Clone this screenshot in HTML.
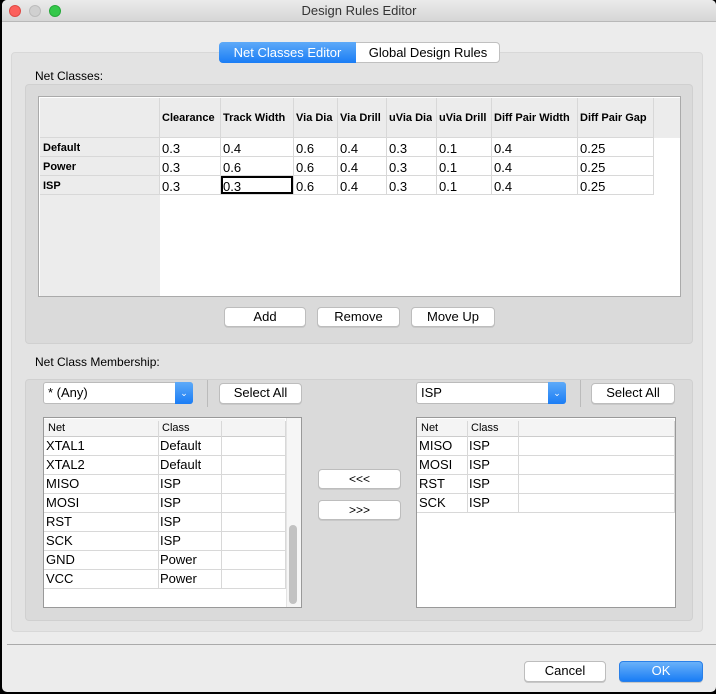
<!DOCTYPE html><html><head><style>
*{box-sizing:border-box;margin:0;padding:0}
body{width:716px;height:694px;background:#000;font-family:"Liberation Sans",sans-serif;font-size:12px;color:#000;position:relative;overflow:hidden}
.a{position:absolute}
.win{left:2px;top:0;width:714px;height:692px;background:#ececec;border-radius:5px;overflow:hidden}
.title{left:0;top:0;width:714px;height:22px;background:linear-gradient(#ebebeb,#d6d6d6);border-bottom:1px solid #b8b8b8;text-align:center;line-height:22px;font-size:13px;color:#333}
.dot{width:12px;height:12px;border-radius:50%;top:5px}
.btn{background:#fff;border:1px solid #bdbdbd;border-radius:4px;text-align:center;font-size:13px;line-height:18px;box-shadow:0 1px 0 #c8c8c8}
.cell{position:absolute;white-space:nowrap;overflow:hidden}
.hl{position:absolute;background:#d8d8d8}
</style></head><body>
<div class="a win"><div class="a" style="left:-2px;top:0;width:716px;height:692px">
<div class="a title" style="left:2px">Design Rules Editor</div>
<div class="a dot" style="left:9px;background:#fc605c;border:1px solid #de4a45"></div>
<div class="a dot" style="left:29px;background:#d0d0d0;border:1px solid #bcbcbc"></div>
<div class="a dot" style="left:49px;background:#34c84a;border:1px solid #26a93a"></div>

<div class="a" style="left:11px;top:52px;width:692px;height:580px;background:#e3e3e3;border:1px solid #d8d8d8;border-radius:4px"></div>
<div class="a" style="left:219px;top:42px;width:281px;height:21px;border:1px solid #c0c0c0;border-radius:4px;background:#fff;font-size:13px;line-height:19px">
<div class="a" style="left:-1px;top:-1px;width:137px;height:21px;background:linear-gradient(#5eaaf8,#1a7df5);border-radius:4px 0 0 4px;color:#fff;text-align:center;line-height:21px">Net Classes Editor</div>
<div class="a" style="left:136px;top:0;width:144px;text-align:center">Global Design Rules</div></div>

<div class="a" style="left:35px;top:69px">Net Classes:</div>
<div class="a" style="left:25px;top:84px;width:668px;height:260px;background:#dadada;border:1px solid #d0d0d0;border-radius:4px"></div>
<div class="a" style="left:38px;top:96px;width:643px;height:201px;background:#fff;border:1px solid #aaa">
<div class="a" style="left:1px;top:1px;width:120px;height:198px;background:#ececec"></div>
<div class="a" style="left:1px;top:1px;width:640px;height:40px;background:#ececec"></div>
</div>
<div id="t"></div>

<div class="a btn" style="left:224px;top:307px;width:82px;height:20px">Add</div>
<div class="a btn" style="left:317px;top:307px;width:83px;height:20px">Remove</div>
<div class="a btn" style="left:411px;top:307px;width:84px;height:20px">Move Up</div>

<div class="a" style="left:35px;top:355px">Net Class Membership:</div>
<div class="a" style="left:25px;top:379px;width:668px;height:242px;background:#dadada;border:1px solid #d0d0d0;border-radius:4px"></div>

<div class="a" style="left:43px;top:382px;width:150px;height:22px;background:#fff;border:1px solid #bbb;border-radius:3px;font-size:13px;line-height:20px;padding-left:4px">* (Any)<div class="a" style="right:-1px;top:-1px;width:18px;height:22px;background:linear-gradient(#5eaaf8,#1a7df5);border-radius:0 3px 3px 0;color:#fff;font-size:9px;text-align:center;line-height:22px">&#8964;</div></div>
<div class="a" style="left:207px;top:380px;width:1px;height:27px;background:#bbb"></div>
<div class="a btn" style="left:219px;top:383px;width:83px;height:21px">Select All</div>
<div class="a" style="left:416px;top:382px;width:150px;height:22px;background:#fff;border:1px solid #bbb;border-radius:3px;font-size:13px;line-height:20px;padding-left:4px">ISP<div class="a" style="right:-1px;top:-1px;width:18px;height:22px;background:linear-gradient(#5eaaf8,#1a7df5);border-radius:0 3px 3px 0;color:#fff;font-size:9px;text-align:center;line-height:22px">&#8964;</div></div>
<div class="a" style="left:580px;top:380px;width:1px;height:27px;background:#bbb"></div>
<div class="a btn" style="left:591px;top:383px;width:84px;height:21px">Select All</div>

<div class="a" style="left:43px;top:417px;width:259px;height:191px;background:#fff;border:1px solid #999"></div>
<div class="a" style="left:416px;top:417px;width:260px;height:191px;background:#fff;border:1px solid #999"></div>
<div class="a" style="left:286px;top:418px;width:15px;height:189px;background:#f6f6f6;border-left:1px solid #e4e4e4"></div>
<div class="a" style="left:289px;top:525px;width:8px;height:79px;background:#c2c2c2;border-radius:4px"></div>
<div id="l"></div>

<div class="a btn" style="left:318px;top:469px;width:83px;height:20px;font-size:12px">&lt;&lt;&lt;</div>
<div class="a btn" style="left:318px;top:500px;width:83px;height:20px;font-size:12px">&gt;&gt;&gt;</div>

<div class="a" style="left:7px;top:644px;width:709px;height:1px;background:#aaa"></div>
<div class="a btn" style="left:524px;top:661px;width:82px;height:21px">Cancel</div>
<div class="a btn" style="left:619px;top:661px;width:84px;height:21px;background:linear-gradient(#6ab1f9,#1a7df5);border-color:#2a80e8;color:#fff">OK</div>
</div></div>
<script>
var h='';
var cx=[160,221,294,338,387,437,492,578,654];
var hd=['Clearance','Track Width','Via Dia','Via Drill','uVia Dia','uVia Drill','Diff Pair Width','Diff Pair Gap'];
for(var i=0;i<8;i++)h+='<div class="cell" style="left:'+(cx[i]+2)+'px;top:112px;font-weight:bold;font-size:11px">'+hd[i]+'</div>';
[159,220,293,337,386,436,491,577,653].forEach(function(x){h+='<div class="hl" style="left:'+x+'px;top:98px;width:1px;height:97px"></div>'});
var rn=['Default','Power','ISP'],rv=[['0.3','0.4','0.6','0.4','0.3','0.1','0.4','0.25'],['0.3','0.6','0.6','0.4','0.3','0.1','0.4','0.25'],['0.3','0.3','0.6','0.4','0.3','0.1','0.4','0.25']];
for(var r=0;r<3;r++){var y=138+r*19;
h+='<div class="hl" style="left:40px;top:'+(y-1)+'px;width:614px;height:1px"></div>';
h+='<div class="cell" style="left:43px;top:'+(y+4)+'px;font-weight:bold;font-size:11px">'+rn[r]+'</div>';
for(i=0;i<8;i++)h+='<div class="cell" style="left:'+(cx[i]+2)+'px;top:'+(y+3)+'px;font-size:13px">'+rv[r][i]+'</div>';}
h+='<div class="hl" style="left:40px;top:194px;width:614px;height:1px"></div>';
h+='<div class="a" style="left:221px;top:176px;width:72px;height:18px;border:2px solid #000"></div>';
document.getElementById('t').innerHTML=h;
var g='';
function list(x0,cols,rows){
g+='<div class="a" style="left:'+x0+'px;top:419px;width:'+(cols[cols.length-1]-x0)+'px;height:18px;background:#f4f4f4;border-bottom:1px solid #ccc"></div>';
g+='<div class="cell" style="left:'+(x0+4)+'px;top:422px;font-size:11px">Net</div><div class="cell" style="left:'+(cols[0]+4)+'px;top:422px;font-size:11px">Class</div>';
cols.forEach(function(c){g+='<div class="hl" style="left:'+c+'px;top:421px;width:1px;height:'+(16+rows.length*19)+'px"></div>'});
rows.forEach(function(rw,k){var y=437+k*19;
g+='<div class="cell" style="left:'+(x0+2)+'px;top:'+(y+1)+'px;font-size:13px">'+rw[0]+'</div><div class="cell" style="left:'+(cols[0]+2)+'px;top:'+(y+1)+'px;font-size:13px">'+rw[1]+'</div>';
g+='<div class="hl" style="left:'+x0+'px;top:'+(y+18)+'px;width:'+(cols[cols.length-1]-x0)+'px;height:1px"></div>';});}
list(44,[158,221,285],[['XTAL1','Default'],['XTAL2','Default'],['MISO','ISP'],['MOSI','ISP'],['RST','ISP'],['SCK','ISP'],['GND','Power'],['VCC','Power']]);
list(417,[467,518,674],[['MISO','ISP'],['MOSI','ISP'],['RST','ISP'],['SCK','ISP']]);
document.getElementById('l').innerHTML=g;
</script>
</body></html>
